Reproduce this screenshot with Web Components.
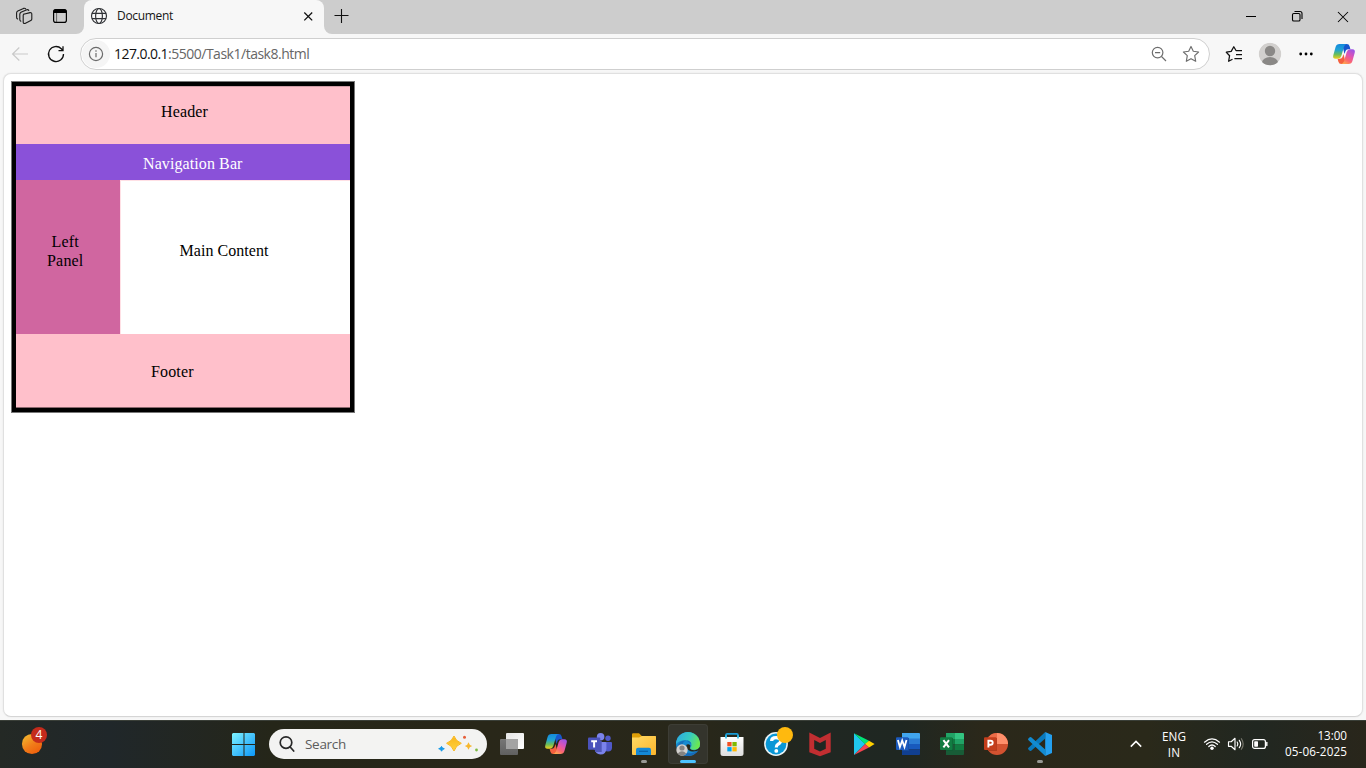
<!DOCTYPE html>
<html lang="en">
<head>
<meta charset="utf-8">
<title>Document</title>
<style>
html,body{margin:0;height:100%;overflow:hidden;background:#f7f7f7}
body{font-family:"Open Sans","Noto Sans",sans-serif}
</style>
</head>
<body>
<desktop-shell></desktop-shell>
<script>
const define = (name, html, setup) => {
  const t = document.createElement('template');
  t.innerHTML = html;
  customElements.define(name, class extends HTMLElement {
    connectedCallback() {
      if (this.shadowRoot) return;
      this.attachShadow({ mode: 'open' }).append(t.content.cloneNode(true));
      if (setup) setup(this);
    }
  });
};

const ICONS = {
  workspaces: `<g fill="none" stroke="#1b1b1b" stroke-width="1.1" stroke-linejoin="round" stroke-linecap="round"><path d="M11.7 10.2 L18 8.6 Q19.8 8.4 19.8 10 V15 Q19.8 16 18.8 16.5 L13 19.4 Q11.2 19.8 11.2 18 V11.5 Q11.2 10.5 12 10.1Z"/><path d="M8.8 17.3 Q7.8 16.8 7.8 15.6 V10.3 Q7.8 9 9 8.3 L14.8 5.8 Q16 5.4 16.8 6.3"/><path d="M5.6 15 Q4.6 14.5 4.6 13.2 V9 Q4.6 7.6 5.8 7 L11.5 4.4 Q13 4 13.7 4.8"/></g>`,
  tabs: `<rect x="5.6" y="5.6" width="12.8" height="12.8" rx="2.2" fill="none" stroke="#000" stroke-width="1.2"/><path d="M5.5 9V7.5Q5.5 5.3 7.7 5.3H16.3Q18.5 5.3 18.5 7.5V9Z"/><path d="M8.6 9V18" stroke="#000" stroke-width=".5"/>`,
  globe: `<g fill="none" stroke="#303236" stroke-width="1.15"><circle cx="12" cy="12" r="7.5"/><ellipse cx="12" cy="12" rx="3.4" ry="7.5"/><path d="M5 9.4H19M5 14.6H19"/></g>`,
  close: `<path d="M8.3 8.5 16.2 16.4M16.2 8.5 8.3 16.4" stroke="#111" stroke-width="1.3"/>`,
  plus: `<path d="M12.5 5V19M5.5 11.5H19.5" stroke="#111" stroke-width="1.1"/>`,
  min: `<path d="M7 12.5H17" stroke="#000"/>`,
  restore: `<g fill="none" stroke="#000" stroke-width="1.1"><rect x="7.5" y="9.5" width="7.5" height="7.5" rx="1.3"/><path d="M9.5 7.5H15Q17 7.5 17 9.5V15"/></g>`,
  winclose: `<path d="M7 8 17 18M17 8 7 18" stroke="#000" stroke-width="1.05"/>`,
  back: `<path d="M20 12H4.8M11.3 5.5 4.6 12 11.3 18.5" fill="none" stroke="#c9c9c9" stroke-width="1.2"/>`,
  reload: `<path d="M19.5 12A7.5 7.5 0 1 1 17.3 6.7L19 8.6M19 4.3V8.7H14.5" fill="none" stroke="#111" stroke-width="1.3"/>`,
  info: `<g fill="none" stroke="#6b6b6b" stroke-width="1.2"><circle cx="12" cy="12" r="6.6"/><path d="M12 11V15.3M12 8.3V9.7"/></g>`,
  zoomout: `<g fill="none" stroke="#6d6d6d" stroke-width="1.2"><circle cx="10.6" cy="10.6" r="5.3"/><path d="M14.5 14.5 19 19M8 10.6H13.2"/></g>`,
  star: `<path d="M12 4.4 14.3 9.3 19.6 10 15.7 13.6 16.7 19.3 12 16.7 7.3 19.3 8.3 13.6 4.4 10 9.7 9.3Z" fill="none" stroke="#6e6e6e" stroke-width="1.15" stroke-linejoin="round"/>`,
  favs: `<path d="M10.5 17.2 6.6 19.3 7.6 13.7 4.3 10.2 9.2 9.4 11.8 4.7 14 8.5H20M14 12.5H20M12.4 16.5H20" fill="none" stroke="#111" stroke-width="1.25" stroke-linejoin="round"/>`,
  profile: `<clipPath id="p"><circle cx="12" cy="12" r="11.3"/></clipPath><g clip-path="url(#p)"><circle cx="12" cy="12" r="11.3" fill="#d2d0ce"/><circle cx="12" cy="9" r="5.2" fill="#8a8886"/><ellipse cx="12" cy="20.5" rx="8" ry="5.4" fill="#8a8886"/></g>`,
  dots: `<circle cx="6.7" cy="12" r="1.4"/><circle cx="12" cy="12" r="1.4"/><circle cx="17.3" cy="12" r="1.4"/>`,
  copilot: `<defs><linearGradient id="a" x1="0" y1="0" x2="0" y2="1"><stop stop-color="#1489dd"/><stop offset=".4" stop-color="#20a3d4"/><stop offset=".7" stop-color="#69bd5a"/><stop offset="1" stop-color="#f3ce1c"/></linearGradient><linearGradient id="b" x1=".8" y1="0" x2=".2" y2="1"><stop stop-color="#9b54e8"/><stop offset=".4" stop-color="#e054b2"/><stop offset=".7" stop-color="#fb6770"/><stop offset="1" stop-color="#ffae4b"/></linearGradient></defs><path d="M10 2H14.8Q17 2 17.6 4.2L18.4 7.2H16Q14.2 7.2 13.5 9L12.5 12Z" fill="#1756cd"/><path d="M14 22H9.2Q7 22 6.4 19.8L5.6 16.8H8Q9.8 16.8 10.5 15L11.5 12Z" fill="#f4603f"/><path d="M7.5 2H15Q12.8 2.2 12 4.8L9.3 14Q8.4 16.8 6 16.8H3.6Q.4 16.8 1.3 13.2L3.5 5.2Q4.4 2 7.5 2Z" fill="url(#a)"/><path d="M16.5 22H9Q11.2 21.8 12 19.2L14.7 10Q15.6 7.2 18 7.2H20.4Q23.6 7.2 22.7 10.8L20.5 18.8Q19.6 22 16.5 22Z" fill="url(#b)"/>`,
  weather: `<defs><linearGradient id="a" x1=".1" y1="0" x2=".8" y2="1"><stop stop-color="#f3bd31"/><stop offset=".55" stop-color="#f17c19"/><stop offset="1" stop-color="#ee5c0b"/></linearGradient></defs><circle cx="12" cy="12" r="11" fill="url(#a)"/>`,
  start: `<defs><linearGradient id="a" x1="0" y1="0" x2="24" y2="24" gradientUnits="userSpaceOnUse"><stop stop-color="#7df3ff"/><stop offset=".5" stop-color="#43c1fc"/><stop offset="1" stop-color="#0693f8"/></linearGradient></defs><path d="M1 0H11.5V11H0V1ZM12.5 0H22L23 1V11H12.5ZM0 12H11.5V23H1L0 22ZM12.5 12H23V22L22 23H12.5Z" fill="url(#a)"/>`,
  search: `<g fill="none" stroke="#282828" stroke-width="1.7" stroke-linecap="round"><circle cx="11" cy="10.6" r="5.8"/><path d="M15.2 15 18.7 19"/></g>`,
  taskview: `<defs><linearGradient id="a" x1="0" y1="0" x2="1" y2="1"><stop stop-color="#e4e4e4"/><stop offset="1" stop-color="#fff"/></linearGradient><linearGradient id="b" x1="0" y1="0" x2="0" y2="1"><stop stop-color="#777"/><stop offset="1" stop-color="#606060"/></linearGradient></defs><rect x="6" y="1" width="18" height="16" rx="1" fill="url(#a)"/><rect x="0" y="7" width="18" height="16" rx="1" fill="url(#b)"/><path d="M6 7H18V17H6Z" fill="#a3a3a3"/>`,
  teams: `<circle cx="12.6" cy="4.7" r="3.8" fill="#7b83eb"/><circle cx="20" cy="6.2" r="2.7" fill="#5059c9"/><path d="M17 10H23Q24 10 24 11V15.5Q24 19.5 20 19.5 17.8 19.5 17 18Z" fill="#5059c9"/><path d="M6.5 10H17.2Q18.4 10 18.4 11.2V16.5Q18.2 22.5 12.5 22.5 7.5 22.3 6.5 17Z" fill="#7b83eb"/><path d="M7 9H13.7V20H7Z" fill="#5058b8"/><rect y="5.6" width="12.2" height="12.2" rx="1" fill="#4b53bc"/><path d="M3.2 8.3H9V10.2H7.1V15.4H5.1V10.2H3.2Z" fill="#fff"/>`,
  folder: `<defs><linearGradient id="a" x1="0" y1="0" x2="1" y2="1"><stop stop-color="#ffda66"/><stop offset="1" stop-color="#fcb52c"/></linearGradient></defs><path d="M0 2.5Q0 1.3 1.2 1.3H7L9.8 4H23Q24 4 24 5V10H0Z" fill="#df9f08"/><path d="M0 5.4H7L10 4H23Q24 4 24 5V22Q24 23 23 23H1Q0 23 0 22Z" fill="url(#a)"/><path d="M4 23V17.7Q4 15.8 6 15.8H17Q19 15.8 19 17.7V23Z" fill="#1489d7"/><path d="M7 19.3H16" stroke="#0860a7" stroke-width="1.2"/>`,
  edge: `<defs><linearGradient id="a" x1="0" y1=".2" x2="1" y2=".5"><stop stop-color="#2eabe4"/><stop offset=".55" stop-color="#36cbc0"/><stop offset="1" stop-color="#6ce84e"/></linearGradient><linearGradient id="b" x1="0" y1="0" x2="1" y2="1"><stop stop-color="#1473ba"/><stop offset="1" stop-color="#1765b8"/></linearGradient></defs><circle cx="12" cy="12" r="12" fill="#178bd0"/><path d="M0 12A12 12 0 0 1 24 12Q24 17.8 18 17.8 14.2 17.8 14.2 16.5C14.2 15.5 15.8 15.1 15.4 12.2Q14.7 8.5 10 8.2 3 8 0 12Z" fill="url(#a)"/><path d="M15.5 12Q14 8.2 10 8.5 5.6 10 7 15.5 9 22.5 16 21 20 20.5 22.6 17.5 19 24 12 24 1 23.5 1.5 14 3 8.5 10 8.2Z" fill="url(#b)"/><path d="M10.5 12.8Q12.2 11.4 14.3 13.2 14.3 15 13.7 16.3 15 18.6 19 18.2 22 18 23.8 15L24 17.2Q20 20.6 14.6 19.2 9.4 17.5 10.5 12.8Z" fill="#282719"/><circle cx="6" cy="18" r="5.7" fill="#d2d0ce"/><circle cx="6" cy="16" r="2.6" fill="#858381"/><path d="M1.8 21.5Q6 17.2 10.2 21.5 6 26 1.8 21.5Z" fill="#858381"/>`,
  store: `<defs><linearGradient id="a" x1="0" y1="0" x2="0" y2="1"><stop stop-color="#fff"/><stop offset="1" stop-color="#ddd"/></linearGradient></defs><path d="M6 8V3Q6 1.9 7.2 1.9H16.8Q18 1.9 18 3V8" fill="none" stroke="#199bd6" stroke-width="1.7"/><path d="M.5 5H23.5V21.5Q23.5 24 21 24H3Q.5 24 .5 21.5Z" fill="url(#a)"/><path d="M6 6.5V3.3M18 6.5V3.3" stroke="#32bde8" stroke-width="1.7"/><path d="M7.3 10H11.6V14.3H7.3Z" fill="#f25022"/><path d="M12.4 10H16.7V14.3H12.4Z" fill="#7fba00"/><path d="M7.3 15.1H11.6V19.4H7.3Z" fill="#00a4ef"/><path d="M12.4 15.1H16.7V19.4H12.4Z" fill="#ffb900"/>`,
  help: `<circle cx="12" cy="12" r="11.9" fill="#e8f2f5"/><circle cx="12" cy="12" r="10.4" fill="#0997d6"/><path d="M7.6 9Q7.6 5.6 12 5.6 16.6 5.6 16.6 9 16.6 10.9 14 12.2 12.3 13.2 12.3 15.4" fill="none" stroke="#fff" stroke-width="3.2"/><circle cx="12.3" cy="18.9" r="1.9" fill="#fff"/>`,
  mcafee: `<path d="M1.3 .6 12 6 22.7 .6V20.3L12 24.2 1.3 20.3ZM6.2 8V16.8L12 19.4 17.8 16.8V8L12 11Z" fill="#c12e31" fill-rule="evenodd"/>`,
  play: `<path d="M2 1.2V23L13.2 12Z" fill="#20c7ee"/><path d="M2 1.2 17 8.7 13.2 12.3Z" fill="#00e578"/><path d="M17 8.7 22.6 12 17 15.5 13 12Z" fill="#ffd000"/><path d="M2 23 13.2 12 17 15.5Z" fill="#f44351"/>`,
  word: `<path d="M6 1H23Q24 1 24 2V7H6Z" fill="#41a5ee"/><path d="M6 6.5H24V12H6Z" fill="#2b7cd3"/><path d="M6 12H24V17.5H6Z" fill="#185abd"/><path d="M6 17.5H24V22Q24 23 23 23H6Z" fill="#103f91"/><path d="M6 6H13V19H6Z" fill="#164a9b"/><rect y="5.3" width="12.5" height="12.7" rx="1" fill="#1b5abe"/><path d="M1.9 8 3.9 15 6.2 8.5 8.5 15 10.5 8" fill="none" stroke="#fff" stroke-width="1.8"/>`,
  excel: `<path d="M6 1H15V7H6Z" fill="#21a366"/><path d="M15 1H23Q24 1 24 2V7H15Z" fill="#33c481"/><path d="M6 7H15V12.5H6Z" fill="#107c41"/><path d="M15 7H24V12.5H15Z" fill="#21a366"/><path d="M6 12.5H15V23H6Z" fill="#185c37"/><path d="M15 12.5H24V18H15Z" fill="#107c41"/><path d="M15 18H24V22Q24 23 23 23H15Z" fill="#185c37"/><path d="M6 6H13V19H6Z" fill="#105c34"/><rect y="5.3" width="12.5" height="12.7" rx="1" fill="#117d42"/><path d="M3.4 8.1 9 15.3M9 8.1 3.4 15.3" stroke="#fff" stroke-width="2"/>`,
  ppt: `<circle cx="13" cy="12" r="11" fill="#d35230"/><path d="M13 12V1A11 11 0 0 0 2 12Z" fill="#ed6c47"/><path d="M13 12V1A11 11 0 0 1 24 12Z" fill="#ff8f6b"/><path d="M4 6H13V19H4Z" fill="#b13d20"/><rect y="5.3" width="12.5" height="12.7" rx="1" fill="#c43e1c"/><path d="M4.4 15.5V8.8H6.6Q8.7 8.8 8.7 10.8 8.7 12.7 6.6 12.7H4.8" fill="none" stroke="#fff" stroke-width="1.9"/>`,
  code: `<path d="M17.2 0 24 3V21L17.2 24Z" fill="#24a0ef"/><path d="M17.2 0V6.5L3.2 18.7Q2.2 19.2 1.4 18.5L.2 17.3Q-.3 16.5.5 15.8Z" fill="#0879bd"/><path d="M17.2 24V17.5L3.2 5.3Q2.2 4.8 1.4 5.5L.2 6.7Q-.3 7.5.5 8.2Z" fill="#128bd1"/>`,
  sparkle: `<defs><linearGradient id="a" x1="0" y1="0" x2="0" y2="1"><stop stop-color="#f8b51e"/><stop offset="1" stop-color="#ffd33d"/></linearGradient></defs><path d="M15 1Q16.8 6.2 22.3 8.3 16.8 10.4 15 16 13 10.4 7.6 8.3 13 6.2 15 1Z" fill="url(#a)" stroke="#f9b820" stroke-linejoin="round"/><path d="M29.5 7.2Q30.2 10.2 33.2 11 30.2 11.8 29.5 14.8 28.8 11.8 25.8 11 28.8 10.2 29.5 7.2Z" fill="#f7b72d"/><path d="M2.5 11.4 3.4 13 5.3 13.7 3.6 14.6 2.5 16.2 1.6 14.5-.3 13.7 1.5 13Z" fill="#1499e8" stroke="#1499e8"/><circle cx="25.5" cy="2.3" r="1.5" fill="#e65e39"/><circle cx="37.5" cy="15" r="1.4" fill="#7dbb43"/>`,
  chevron: `<path d="M6.8 14.6 12 9.4 17.2 14.6" fill="none" stroke="#fff" stroke-width="1.5"/>`,
  wifi: `<g fill="none" stroke="#fff" stroke-width="1.25" stroke-linecap="round"><path d="M4.5 10.2Q12 3.7 19.5 10.2M6.6 12.3Q12 7.5 17.4 12.3M8.8 14.5Q12 11.5 15.2 14.5"/></g><circle cx="12" cy="16.3" r="1.7" fill="#fff"/>`,
  volume: `<g fill="none" stroke="#fff" stroke-width="1.15" stroke-linecap="round" stroke-linejoin="round"><path d="M4.5 9.7H7.2L11 6.3V17.7L7.2 14.3H4.5ZM13.2 10Q14.5 12 13.2 14M15.3 8.3Q18 12 15.3 15.7"/><path d="M17.4 6.7Q21 12 17.4 17.3" stroke="#77776d"/></g>`,
  battery: `<rect x="4.6" y="7.6" width="12.8" height="8.8" rx="2" fill="none" stroke="#fff" stroke-width="1.2"/><rect x="6.2" y="9.2" width="3.8" height="5.6" rx=".7" fill="#fff"/><path d="M18.8 10.5V13.5" stroke="#fff" stroke-width="1.4" stroke-linecap="round"/>`
};

define('ui-icon', `<style>:host{display:block;width:24px;height:24px;flex:none}svg{display:block;width:100%;height:100%;overflow:visible}</style>`, el => {
  const box = document.createElement('div');
  box.style.height = '100%';
  box.innerHTML = `<svg viewBox="${el.getAttribute('box') || '0 0 24 24'}">${ICONS[el.getAttribute('name')]}</svg>`;
  el.shadowRoot.append(box);
});

/* A single line of text tracked to a given width */
define('fit-text', `<style>:host{display:block;white-space:nowrap;flex:none}span{display:inline-block}</style><span><slot></slot></span>`, el => {
  const s = el.shadowRoot.querySelector('span');
  const n = el.textContent.length, w = +el.getAttribute('w');
  s.style.letterSpacing = (w - s.getBoundingClientRect().width) / n + 'px';
});

define('tab-strip', `<style>
:host{display:flex;height:34px;background:#cdcdcd;align-items:flex-start}
.tools{display:flex;width:84px;height:34px;box-sizing:border-box;padding:4px 0 0 12px;gap:12px;background:#cdcdcd;border-radius:0 0 8px 0}
.rest{flex:1;display:flex;height:34px;box-sizing:border-box;background:#cdcdcd;border-radius:0 0 0 8px;padding:4px 11px 0 5px}
.under{background:#f7f7f7;display:flex;width:100%}
.tab{width:240px;height:34px;box-sizing:border-box;background:#f7f7f7;border-radius:8px 8px 0 0;display:flex;padding:4px 4px 0 3px}
.tabwrap{background:linear-gradient(#cdcdcd 20px,#f7f7f7 20px)}
fit-text{font-size:12px;line-height:24px;color:#161616;margin-left:6px}
.x{margin-left:auto}
.win{margin-left:auto;display:flex;gap:22px}
</style><div class="under"><div class="tools"><ui-icon name="workspaces"></ui-icon><ui-icon name="tabs"></ui-icon></div>
<div class="tabwrap"><div class="tab"><ui-icon name="globe"></ui-icon><fit-text w="56">Document</fit-text><ui-icon class="x" name="close"></ui-icon></div></div>
<div class="rest"><ui-icon name="plus"></ui-icon><div class="win"><ui-icon name="min"></ui-icon><ui-icon name="restore"></ui-icon><ui-icon name="winclose"></ui-icon></div></div></div>`);

define('address-bar', `<style>
:host{display:flex;width:1130px;height:32px;box-sizing:border-box;border:1px solid #cfcfcf;border-radius:16px;background:#fff;align-items:center;padding:0 6px 0 1px}
.i{width:28px;height:28px;border-radius:50%;background:#f5f5f5;display:grid;place-items:center}
.url{display:flex;margin-left:4px;font-size:14px;line-height:28px;color:#111}
.dim{color:#666}
.end{display:flex;gap:8px;margin-left:auto}
</style><div class="i"><ui-icon name="info"></ui-icon></div><div class="url"><fit-text w="54">127.0.0.1</fit-text><fit-text class="dim" w="141.3">:5500/Task1/task8.html</fit-text></div><div class="end"><ui-icon name="zoomout"></ui-icon><ui-icon name="star"></ui-icon></div>`);

define('tool-bar', `<style>
:host{display:flex;height:39px;box-sizing:border-box;background:#f7f7f7;align-items:center;padding:0 10px 0 8px}
.nav{display:flex;gap:12px;width:72px}
.right{display:flex;gap:12px;margin-left:12px}
.cp{margin-left:2px}
</style><div class="nav"><ui-icon name="back"></ui-icon><ui-icon name="reload"></ui-icon></div><address-bar></address-bar><div class="right"><ui-icon name="favs"></ui-icon><ui-icon name="profile"></ui-icon><ui-icon name="dots"></ui-icon><ui-icon class="cp" name="copilot"></ui-icon></div>`);

define('layout-demo', `<style>
:host{display:block;width:344px;height:332px;box-sizing:border-box;border:1px solid #777;font:16px/19px "Liberation Serif",serif;color:#000}
.frame{height:330px;box-sizing:border-box;border:4px solid #000;display:grid;grid-template-rows:58px 36px 154px 1fr}
.h,.f{background:#ffc0cb}
.h{padding:15px 0 0 145px;border-top:1px solid #cf9ea7;box-sizing:border-box}
.n{background:#8a51d9;color:#fff;padding:10px 0 0 127px}
.mid{display:grid;grid-template-columns:104px 1fr}
.l{background:#d066a0;padding-top:52px;display:flex;flex-direction:column;align-items:flex-start}
.l fit-text:first-child{margin-left:35.5px}.l fit-text:last-child{margin-left:31px}
.m{background:#fff;padding:60px 0 0 58.5px;border:1px solid #ffe0e5;border-width:1px 0 0 1px}
.f{padding:28px 0 0 135px;border-bottom:1px solid #8a676d}
</style><div class="frame"><div class="h"><fit-text w="47">Header</fit-text></div><div class="n"><fit-text w="99.5">Navigation Bar</fit-text></div><div class="mid"><div class="l"><fit-text w="27.5">Left</fit-text><fit-text w="36.5">Panel</fit-text></div><div class="m"><fit-text w="89">Main Content</fit-text></div></div><div class="f"><fit-text w="42.7">Footer</fit-text></div></div>`);

define('page-view', `<style>
:host{display:block;height:644px;margin:0 3px;box-sizing:border-box;border:1px solid #e0e0e0;border-bottom-color:#d5d5d5;border-radius:8px;background:#fff;padding:7px 0 0 7px;box-shadow:0 0 2px rgba(0,0,0,.08)}
</style><slot></slot>`);

define('task-item', `<style>
:host{display:block;width:44px;height:47px;flex:none;position:relative}
.b{margin:3px 2px 0;height:40px;border-radius:4px;display:grid;place-items:center;box-sizing:border-box}
:host([active]) .b{background:#34342c;box-shadow:inset 0 0 0 1px #3d3d35}
.run{position:absolute;left:19px;top:39px;width:6px;height:3px;border-radius:2px;background:#999995;display:none}
:host([open]) .run,:host([active]) .run{display:block}
:host([active]) .run{left:14px;width:16px;background:#4cc2ff}
.dot{position:absolute;left:23px;top:6px;width:16px;height:16px;border-radius:50%;background:#ffb90e;display:none}
:host([badge]) .dot{display:block}
</style><div class="b"><slot></slot></div><i class="run"></i><i class="dot"></i>`);

define('search-box', `<style>
:host{display:flex;width:218px;height:30px;border-radius:15px;background:#f3f3f2;align-items:center;box-sizing:border-box;padding:0 8px 0 6px}
fit-text{font-size:13.5px;color:#5c5c5c;margin-left:6px}
.s{width:40px;height:18px;margin-left:auto}
</style><ui-icon name="search"></ui-icon><fit-text w="41">Search</fit-text><ui-icon class="s" box="0 0 40 18" name="sparkle"></ui-icon>`);

define('task-bar', `<style>
:host{display:flex;height:48px;box-sizing:border-box;border-top:1px solid #3a3f38;background:linear-gradient(90deg,#242925 0,#20272a 8%,#252619 20%,#292719 35%,#28271a 52%,#202722 60%,#1f2722 66%,#2b281a 72%,#2a291a 84%,#212721 92%,#29261b 100%);color:#fff}
.w{width:232px;padding:12px 0 0 21px;box-sizing:border-box;position:relative}
.w ui-icon{width:22px;height:22px}
.badge{position:absolute;left:31px;top:6px;width:16px;height:16px;border-radius:50%;background:#c42b1c;font-size:12px;line-height:16px;text-align:center}
.st{margin-top:12px}
search-box{margin:8px 3px 0 13px}
.apps{display:flex;width:572px}
.tray{display:flex;flex:1;padding:11px 19px 0 62px}
.lang,.clock{font-size:11.7px;line-height:16px;margin-top:-4px}
.lang{width:28px;margin-left:12px;display:flex;flex-direction:column;align-items:center}
.sys{display:flex;margin-left:12px}
.clock{margin:-5px 0 0 auto;display:flex;flex-direction:column;align-items:flex-end}
</style><div class="w"><ui-icon name="weather"></ui-icon><div class="badge">4</div></div><ui-icon class="st" name="start"></ui-icon><search-box></search-box>
<div class="apps">
<task-item><ui-icon name="taskview"></ui-icon></task-item><task-item><ui-icon name="copilot"></ui-icon></task-item><task-item><ui-icon name="teams"></ui-icon></task-item><task-item open><ui-icon name="folder"></ui-icon></task-item><task-item active><ui-icon name="edge"></ui-icon></task-item><task-item><ui-icon name="store"></ui-icon></task-item><task-item badge><ui-icon name="help"></ui-icon></task-item><task-item><ui-icon name="mcafee"></ui-icon></task-item><task-item><ui-icon name="play"></ui-icon></task-item><task-item><ui-icon name="word"></ui-icon></task-item><task-item><ui-icon name="excel"></ui-icon></task-item><task-item><ui-icon name="ppt"></ui-icon></task-item><task-item open><ui-icon name="code"></ui-icon></task-item>
</div>
<div class="tray"><ui-icon name="chevron"></ui-icon><div class="lang"><fit-text w="24">ENG</fit-text><fit-text w="12.5">IN</fit-text></div><div class="sys"><ui-icon name="wifi"></ui-icon><ui-icon name="volume"></ui-icon><ui-icon name="battery"></ui-icon></div><div class="clock"><fit-text w="29.5">13:00</fit-text><fit-text w="62">05-06-2025</fit-text></div></div>`);

define('desktop-shell', `<style>
:host{display:flex;flex-direction:column;width:1366px;height:768px;background:#f7f7f7}
task-bar{margin-top:auto}
</style><tab-strip></tab-strip><tool-bar></tool-bar><page-view><layout-demo></layout-demo></page-view><task-bar></task-bar>`);
</script>
</body>
</html>
